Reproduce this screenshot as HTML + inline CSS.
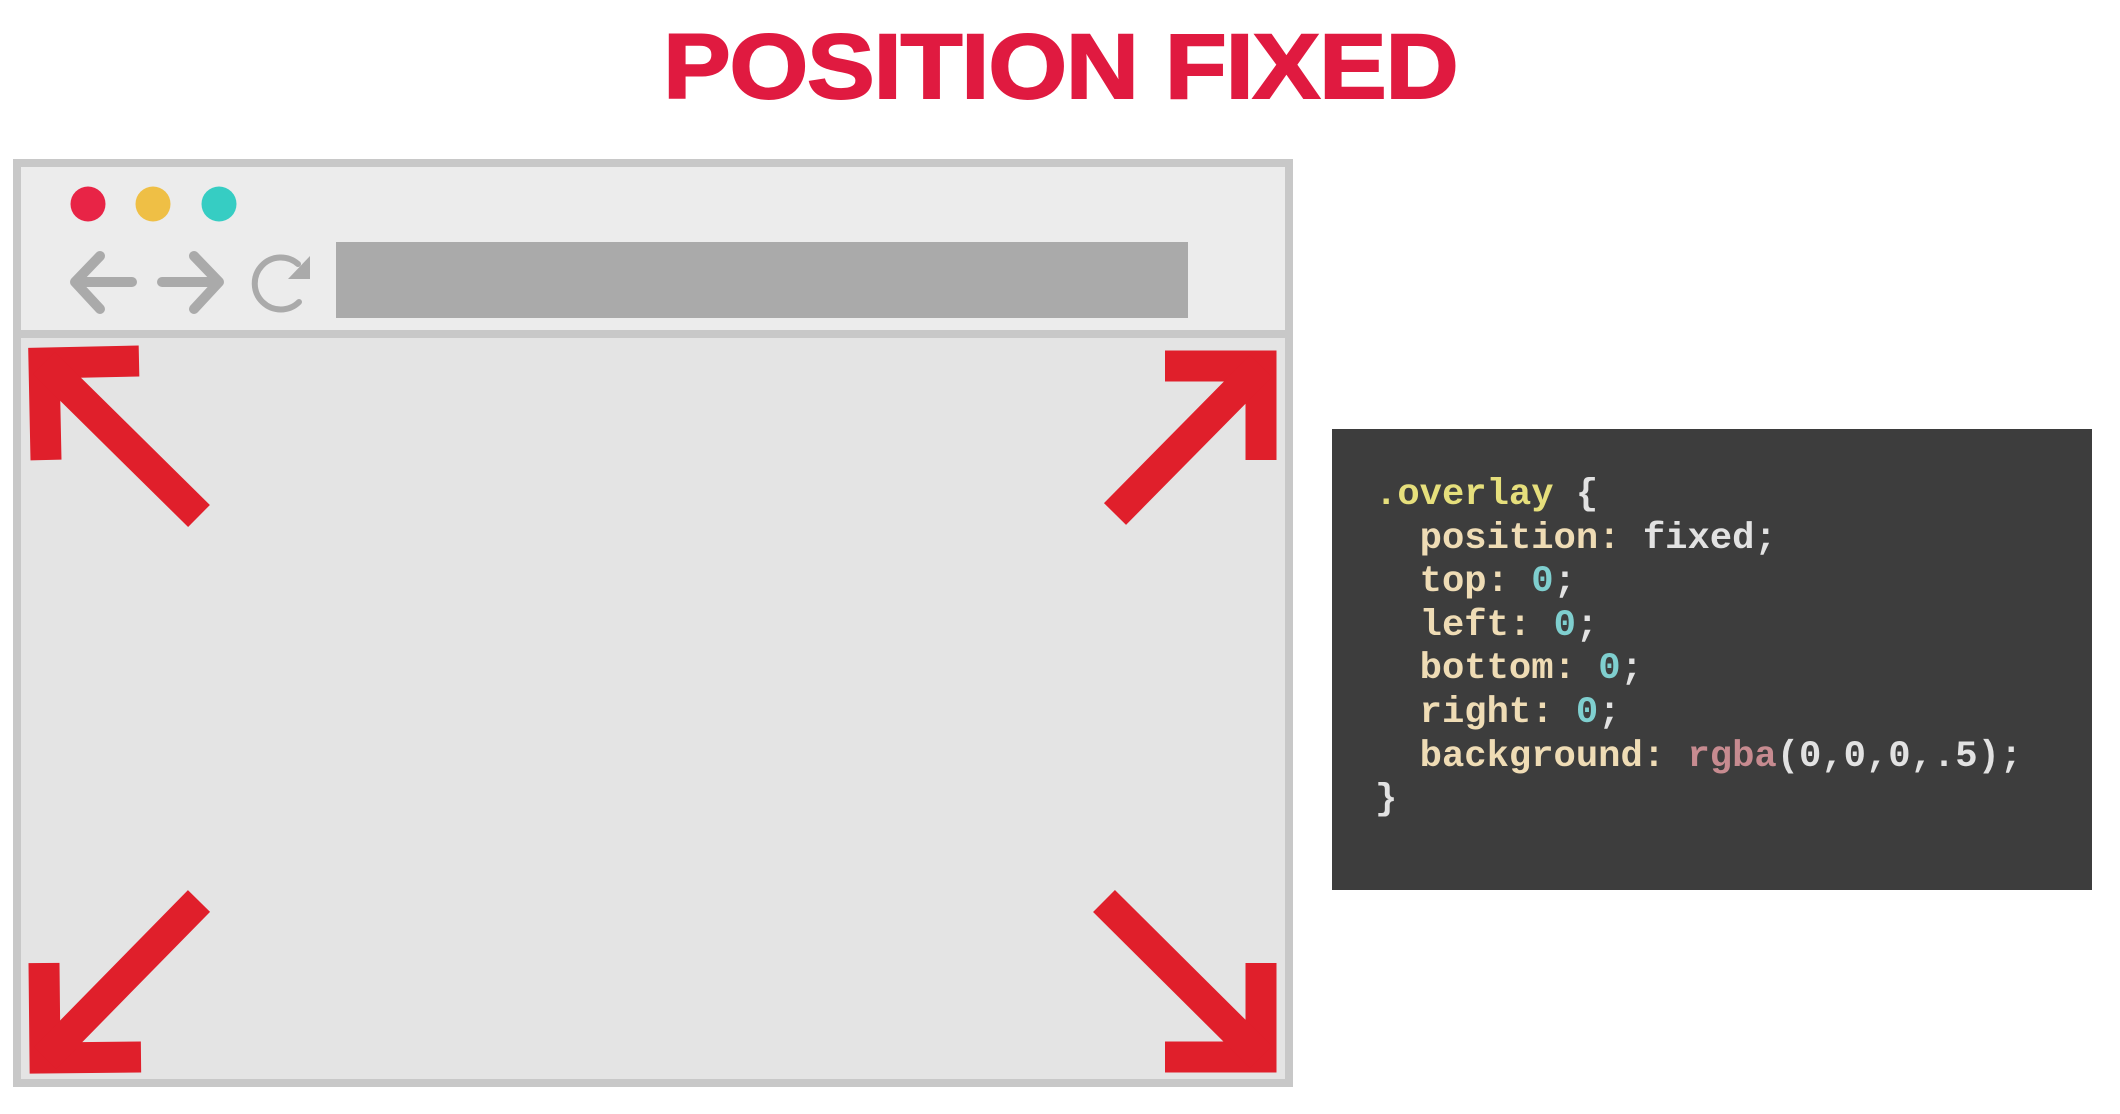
<!DOCTYPE html>
<html><head><meta charset="utf-8"><style>
html,body{margin:0;padding:0;background:#fff;width:2120px;height:1114px;overflow:hidden;position:relative}
.title{position:absolute;left:0;width:2120px;top:21px;text-align:center;font-family:"Liberation Sans",sans-serif;font-weight:bold;font-size:92px;letter-spacing:-1px;color:#e01a40;line-height:92px;transform:scaleX(1.1);transform-origin:1057px 0;-webkit-text-stroke:2px #e01a40}
.code{position:absolute;left:1332px;top:429px;width:760px;height:461px;background:#3d3d3d}
.code pre{margin:0;position:absolute;left:43px;top:45px;font-family:"Liberation Mono",monospace;font-weight:bold;font-size:37.2px;line-height:43.6px;color:#e2e2e2}
.y{color:#e6df7c}.b{color:#efdcb5}.c{color:#7fcfcf}.p{color:#c78b90}
</style></head><body>
<div class="title">POSITION FIXED</div>
<svg width="2120" height="1114" style="position:absolute;left:0;top:0">
<rect x="17" y="163" width="1272" height="920" fill="#e4e4e4" stroke="#c8c8c8" stroke-width="8"/>
<rect x="21" y="167" width="1264" height="164" fill="#ececec"/>
<rect x="21" y="330" width="1264" height="8" fill="#c8c8c8"/>
<circle cx="88" cy="204" r="17.5" fill="#e82446"/>
<circle cx="153" cy="204" r="17.5" fill="#efbf45"/>
<circle cx="219" cy="204" r="17.5" fill="#36cdc3"/>
<rect x="336" y="242" width="852" height="76" fill="#aaaaaa"/>
<g stroke="#aaaaaa" stroke-width="10" fill="none" stroke-linecap="round" stroke-linejoin="round">
<path d="M100 256 L75 282 L100 309 M75 282 L132 282"/>
<path d="M194 256 L219 282 L194 309 M162 282 L219 282"/>
<path d="M298 264 A26 26 0 1 0 299 302" stroke-width="6"/>
</g>
<path d="M310 256 L310 279 L288 279 Z" fill="#aaaaaa"/>
<g stroke="#e01f2b" stroke-width="31" fill="none" stroke-linejoin="miter" stroke-linecap="butt">
<path d="M139 361 L44 363 L46 460"/><path d="M44 363 L199 516"/>
<path d="M1165 366 L1261 366 L1261 460"/><path d="M1261 366 L1115 514"/>
<path d="M44 963 L45 1058 L141 1057"/><path d="M45 1058 L199 901"/>
<path d="M1261 963 L1261 1057 L1165 1057"/><path d="M1261 1057 L1104 901"/>
</g>
</svg>
<div class="code"><pre><span class="y">.overlay</span> {
  <span class="b">position:</span> fixed;
  <span class="b">top:</span> <span class="c">0</span>;
  <span class="b">left:</span> <span class="c">0</span>;
  <span class="b">bottom:</span> <span class="c">0</span>;
  <span class="b">right:</span> <span class="c">0</span>;
  <span class="b">background:</span> <span class="p">rgba</span>(0,0,0,.5);
}</pre></div>
</body></html>
